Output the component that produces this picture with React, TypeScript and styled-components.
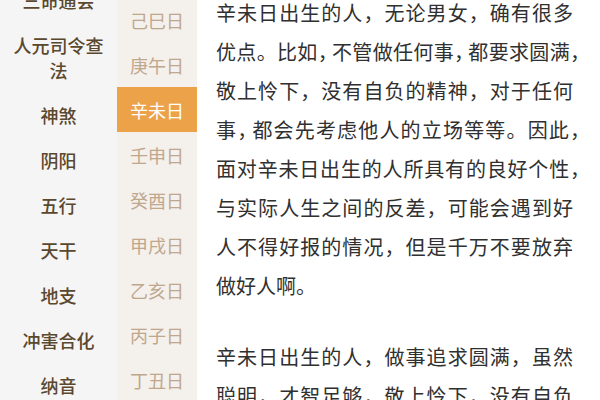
import React from 'react';
import styled, { createGlobalStyle } from 'styled-components';

const GlobalStyle = createGlobalStyle`
  html, body {
    margin: 0;
    padding: 0;
    width: 600px;
    height: 400px;
    overflow: hidden;
    background: #ffffff;
  }
  body {
    font-family: "Noto Sans CJK SC", "Noto Sans", sans-serif;
  }
`

const Page = styled.div`
  display: flex;
  width: 600px;
  height: 400px;
  overflow: hidden;
`

const Nav = styled.div<{ $scroll: number }>`
  flex: 0 0 117px;
  background: #f5f5f5;
  overflow: hidden;
  & > ul {
    margin: ${p => -p.$scroll}px 0 0;
    padding: 0;
    list-style: none;
  }
`

const NavItem = styled.li`
  padding: 10px 12px;
  font-size: 18px;
  font-weight: 500;
  line-height: 25px;
  color: #5a482e;
  text-align: center;
`

const DayList = styled.div<{ $scroll: number }>`
  flex: 0 0 80px;
  background: #f4f0ec;
  overflow: hidden;
  & > ul {
    margin: ${p => -p.$scroll}px 0 0;
    padding: 0;
    list-style: none;
  }
`

const DayItem = styled.li<{ $active?: boolean }>`
  height: 45px;
  display: flex;
  align-items: center;
  justify-content: center;
  font-size: 18px;
  color: ${p => (p.$active ? '#ffffff' : '#bfa78d')};
  background: ${p => (p.$active ? '#eca248' : 'transparent')};
`

const Article = styled.div<{ $scroll: number }>`
  flex: 1;
  overflow: hidden;
  padding-left: 19px;
  & > div {
    margin-top: ${p => -p.$scroll}px;
  }
`

const Para = styled.div`
  color: #303030;
  font-size: 20px;
  line-height: 39px;
  & + & {
    margin-top: 32px;
  }
`

const Line = styled.div<{ $last?: boolean }>`
  width: 357px;
  text-align: justify;
  text-align-last: ${p => (p.$last ? 'left' : 'justify')};
`

// squeezed punctuation inside a line, or hanging punctuation at its end
const Punc = styled.span<{ $hang?: boolean }>`
  letter-spacing: ${p => (p.$hang ? '-0.85em' : '-0.3em')};
`

const navItems = ['三命通会', '人元司令查法', '神煞', '阴阳', '五行', '天干', '地支', '冲害合化', '纳音', '十二长生']
const days = ['己巳日', '庚午日', '辛未日', '壬申日', '癸酉日', '甲戌日', '乙亥日', '丙子日', '丁丑日', '戊寅日']

// "~" squeezes the next mark, "^" lets it hang past the line end
const paragraphs = [
  [
    '辛未日出生的人，无论男女，确有很多',
    '优点。比如~，不管做任何事~，都要求圆满^，',
    '敬上怜下，没有自负的精神，对于任何',
    '事~，都会先考虑他人的立场等等。因此^，',
    '面对辛未日出生的人所具有的良好个性^，',
    '与实际人生之间的反差，可能会遇到好',
    '人不得好报的情况，但是千万不要放弃',
    '做好人啊。',
  ],
  [
    '辛未日出生的人，做事追求圆满，虽然',
    '聪明，才智足够，敬上怜下，没有自负',
  ],
]

const renderLine = (text: string) => {
  const out: React.ReactNode[] = []
  let buf = ''
  for (let i = 0; i < text.length; i++) {
    const ch = text[i]
    if (ch === '~' || ch === '^') {
      if (buf) out.push(buf)
      buf = ''
      out.push(<Punc key={i} $hang={ch === '^'}>{text[i + 1]}</Punc>)
      i++
    } else {
      buf += ch
    }
  }
  if (buf) out.push(buf)
  return out
}

const App: React.FC = () => {
  return (
    <>
      <GlobalStyle />
      <Page>
        <Nav $scroll={22}>
          <ul>
            {navItems.map(item => (
              <NavItem key={item}>{item}</NavItem>
            ))}
          </ul>
        </Nav>
        <DayList $scroll={3}>
          <ul>
            {days.map(day => (
              <DayItem key={day} $active={day === '辛未日'}>{day}</DayItem>
            ))}
          </ul>
        </DayList>
        <Article $scroll={7}>
          <div>
            {paragraphs.map((lines, i) => (
              <Para key={i}>
                {lines.map((line, j) => (
                  <Line key={j} $last={line.endsWith('。')}>{renderLine(line)}</Line>
                ))}
              </Para>
            ))}
          </div>
        </Article>
      </Page>
    </>
  )
}

export default App
